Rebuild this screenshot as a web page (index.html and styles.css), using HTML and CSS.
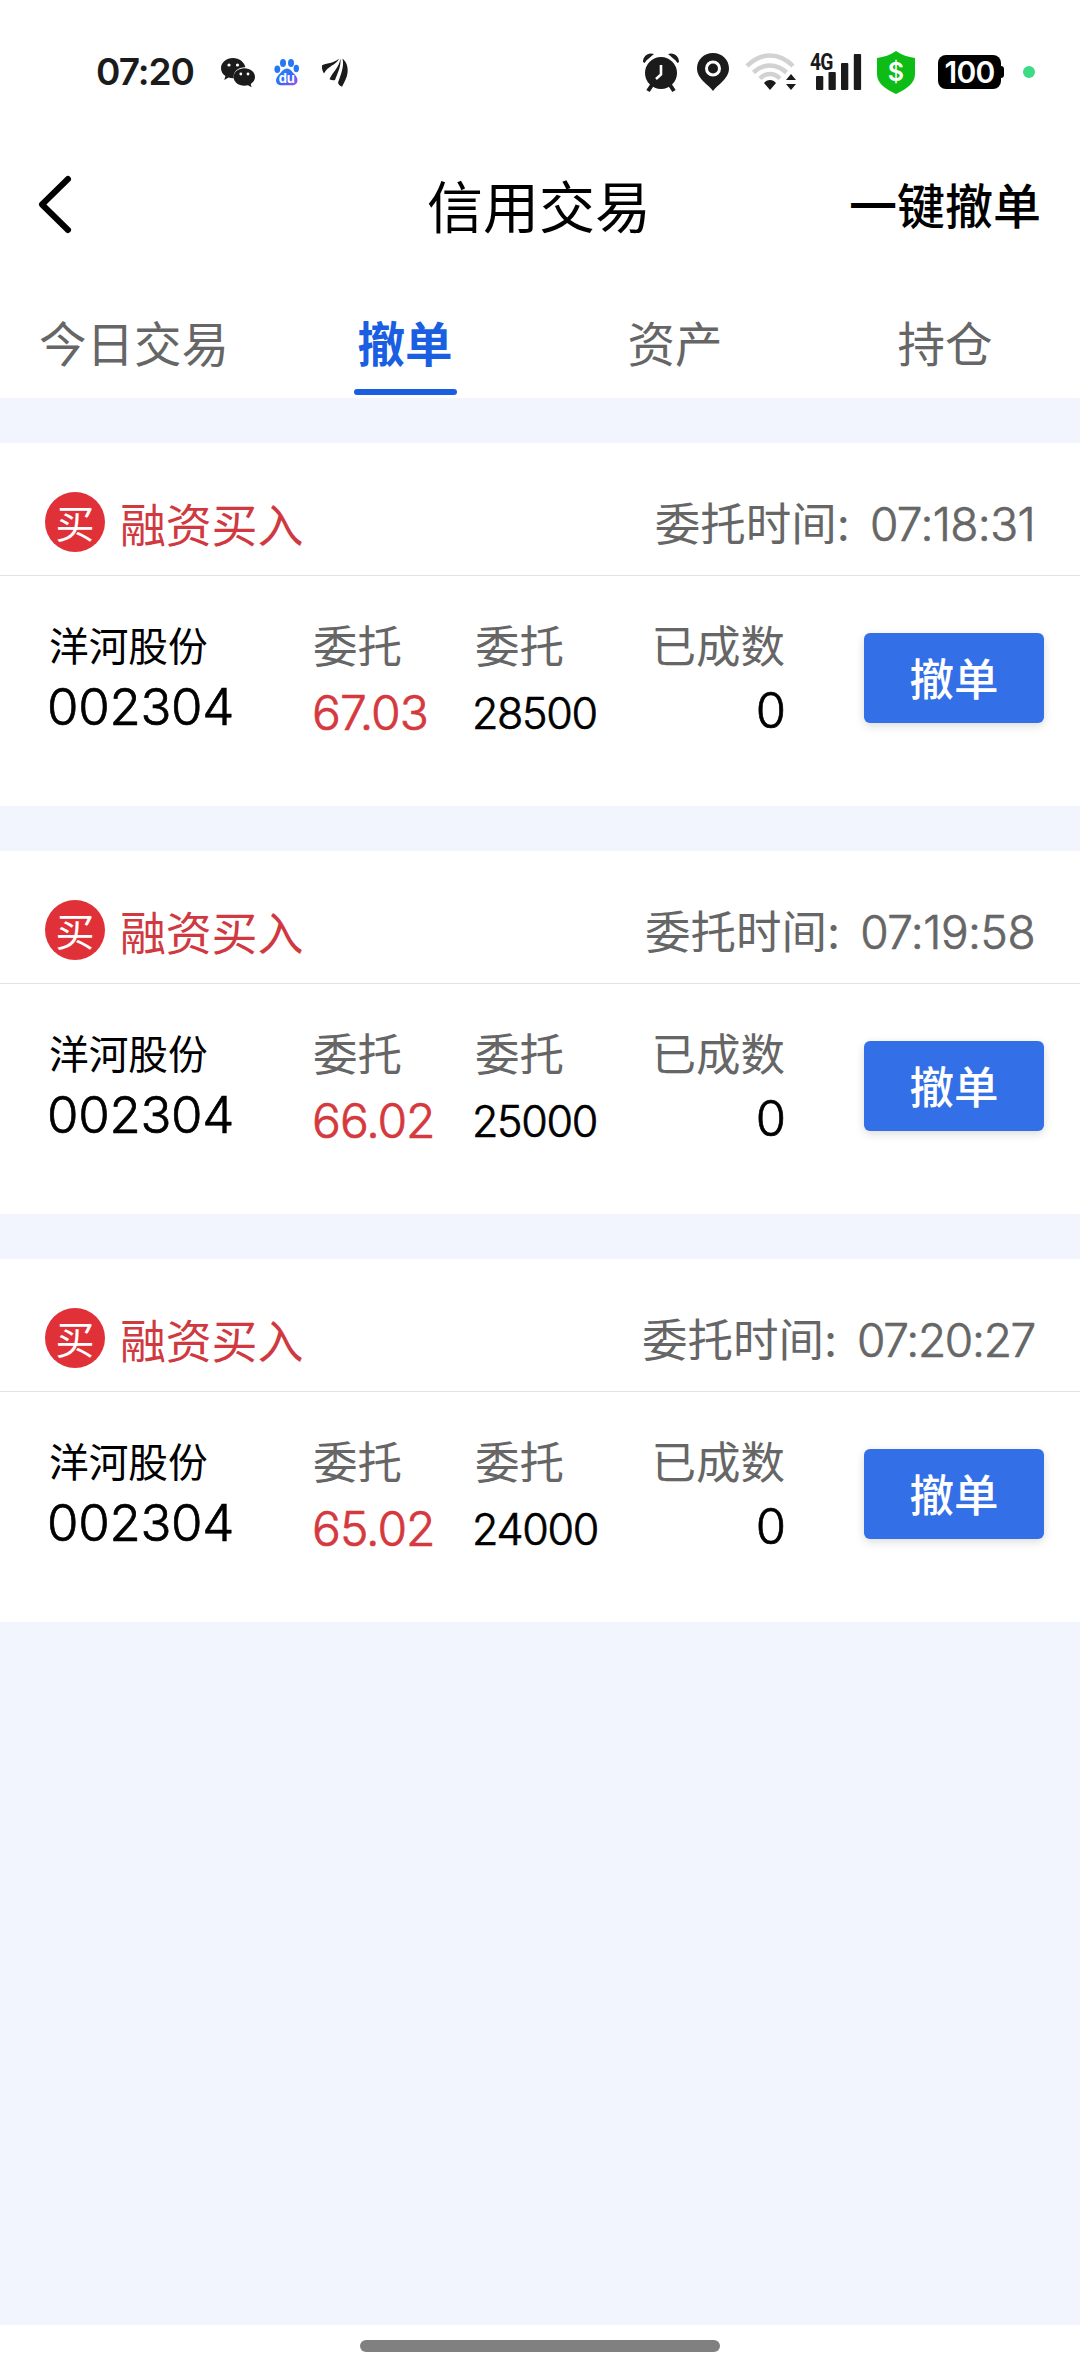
FILE: index.html
```html
<!DOCTYPE html>
<html lang="zh-CN">
<head>
<meta charset="utf-8">
<title>信用交易</title>
<link rel="stylesheet" href="styles.css">
</head>
<body>
<div class="status">
  <span class="clock">07:20</span>
  <svg class="i-wechat" width="36" height="32" viewBox="0 0 36 32"><path fill="#1b1b1b" d="M13 2C6.300 2 1 6.500 1 12.200c0 3.200 1.700 6 4.400 7.900L4.300 24l4.300-2.400c1.400.4 2.900.6 4.400.6h.8C12.500 15.500 18.500 11 25.400 11.200 24.200 5.800 19 2 13 2z"/><path fill="#1b1b1b" d="M24.300 12.300c-6 0-10.700 3.900-10.700 8.700s4.700 8.700 10.700 8.700c1.300 0 2.600-.2 3.700-.5l3.600 2-.9-3.300C33.300 26.300 35 23.800 35 21c0-4.800-4.700-8.700-10.700-8.700z"/><g fill="#fff"><circle cx="9" cy="9" r="1.600"/><circle cx="17.500" cy="9" r="1.600"/><circle cx="20.800" cy="18" r="1.400"/><circle cx="28" cy="18" r="1.400"/></g></svg>
  <svg class="i-paw" width="26" height="28" viewBox="0 0 26 28"><defs><linearGradient id="paw" x1="0" y1="0" x2="1" y2="1"><stop offset="0" stop-color="#1f8bff"/><stop offset=".6" stop-color="#3b66f5"/><stop offset="1" stop-color="#b44cf0"/></linearGradient></defs><g fill="#2577f4"><ellipse cx="3.300" cy="11.300" rx="2.900" ry="3.700"/><ellipse cx="9" cy="5" rx="3" ry="4"/><ellipse cx="17" cy="5" rx="3" ry="4"/><ellipse cx="22.300" cy="10.500" rx="2.700" ry="3.700"/></g><path fill="url(#paw)" d="M13 10.500c3 0 4.500 2.500 6.500 4.800 2 2.200 4 4 4 7 0 3.200-2.300 5-5.300 5H7.500c-3.200 0-5.500-2-5.500-5 0-3 2.200-4.800 4.200-7 2-2.300 3.800-4.800 6.800-4.800z"/><text x="12.800" y="24.500" text-anchor="middle" class="pawtext">du</text></svg>
  <svg class="i-wing" width="28" height="32" viewBox="0 0 28 32"><path fill="#1b1b1b" d="M1 9.500C3.500 7.500 11 8 18 2.800 15.500 9 6.500 10 3 17.500 1.300 15 .7 12 1 9.500zM19.500 2.500c.8 7.500-3 15-5.500 21.500-1.900.4-3.800.1-5.500-.8C11.500 16 18 12 19.500 2.500z"/><path fill="#1b1b1b" d="M21.500 2.500c4.300 3.500 5.800 9 5 14.500-.6 4.500-3 9-5.500 13.800-1.800-.8-3.600-2.200-4-4C19.500 19 23.500 11.500 21.500 2.500z"/></svg>
  <svg class="i-alarm" width="38" height="40" viewBox="0 0 38 40"><circle cx="19" cy="21" r="16" fill="#1b1b1b"/><path stroke="#1b1b1b" stroke-width="4" d="M10 33l-4 6M28 33l4 6"/><path fill="#1b1b1b" d="M1 10C1 4 6 0 12 2 9 5 5 7 2.500 11zM37 10C37 4 32 0 26 2c3 3 7 5 9.500 9z"/><path fill="none" stroke="#fff" stroke-width="2.600" d="M19 13v9.500l-5 4.500"/></svg>
  <svg class="i-pin" width="32" height="38" viewBox="0 0 32 38"><path fill="#1b1b1b" d="M16 0C7 0 0 6.800 0 15.300c0 5.500 3 9.700 7 13.700 3 3 6.500 5.500 9 9 2.500-3.500 6-6 9-9 4-4 7-8.200 7-13.700C32 6.800 25 0 16 0z"/><circle cx="16" cy="15.500" r="6.500" fill="none" stroke="#fff" stroke-width="3"/></svg>
  <svg class="i-wifi" width="52" height="38" viewBox="0 0 52 38"><g fill="none" stroke="#d2d2d2" stroke-width="4.500"><path d="M2 13C16-1 34-1 48 13"/><path d="M8.500 19.500c10-9.500 23-9.500 33 0"/><path d="M15 25.500c6-6 14-6 20 0"/></g><path fill="#1b1b1b" d="M25 37l-6-7c3-4 9-4 12 0zM46 21l5 6H41zM46 37l5-6H41z"/></svg>
  <svg class="i-signal" width="53" height="40" viewBox="0 0 53 40"><text transform="translate(1 17.500) scale(.84 1)" class="gtext">4G</text><g fill="#1b1b1b"><rect x="7" y="24" width="7.300" height="14" rx="1"/><rect x="19.500" y="20" width="7.300" height="18" rx="1"/><rect x="32" y="11" width="7.300" height="27" rx="1"/><rect x="44.800" y="2" width="7.300" height="36" rx="1"/></g></svg>
  <svg class="i-shield" width="38" height="43" viewBox="0 0 38 43"><path fill="#0dbd15" d="M19 0C25 4 31 6 38 7v16c0 9-8 15-19 20C8 38 0 32 0 23V7C7 6 13 4 19 0z"/><text x="19" y="30" text-anchor="middle" class="dollar">$</text></svg>
  <span class="battery">100</span>
  <span class="dot"></span>
</div>

<header class="nav">
  <svg width="36" height="60" viewBox="0 0 36 60"><path d="M32 5L6 30.500 32 56" fill="none" stroke="#000" stroke-width="6" stroke-linecap="round" stroke-linejoin="round"/></svg>
  <h1 class="title">信用交易</h1>
  <span class="all">一键撤单</span>
</header>

<nav class="tabs">
  <span class="tab first">今日交易</span>
  <span class="tab active">撤单</span>
  <span class="tab">资产</span>
  <span class="tab">持仓</span>
</nav>

<main class="list">
  <section class="card">
    <div class="head"><span class="badge">买</span><span class="kind">融资买入</span><span class="when">委托时间<span class="colon">:</span></span><span class="time t1">07:18:31</span></div>
    <div class="body">
      <div class="col stock"><span class="name">洋河股份</span><span class="code">002304</span></div>
      <div class="col"><span class="label">委托</span><span class="price">67.03</span></div>
      <div class="col"><span class="label">委托</span><span class="qty">28500</span></div>
      <div class="col done"><span class="label">已成数</span><span class="filled">0</span></div>
      <button class="cancel">撤单</button>
    </div>
  </section>
  <section class="card">
    <div class="head"><span class="badge">买</span><span class="kind">融资买入</span><span class="when">委托时间<span class="colon">:</span></span><span class="time t2">07:19:58</span></div>
    <div class="body">
      <div class="col stock"><span class="name">洋河股份</span><span class="code">002304</span></div>
      <div class="col"><span class="label">委托</span><span class="price">66.02</span></div>
      <div class="col"><span class="label">委托</span><span class="qty">25000</span></div>
      <div class="col done"><span class="label">已成数</span><span class="filled">0</span></div>
      <button class="cancel">撤单</button>
    </div>
  </section>
  <section class="card">
    <div class="head"><span class="badge">买</span><span class="kind">融资买入</span><span class="when">委托时间<span class="colon">:</span></span><span class="time t3">07:20:27</span></div>
    <div class="body">
      <div class="col stock"><span class="name">洋河股份</span><span class="code">002304</span></div>
      <div class="col"><span class="label">委托</span><span class="price">65.02</span></div>
      <div class="col"><span class="label">委托</span><span class="qty">24000</span></div>
      <div class="col done"><span class="label">已成数</span><span class="filled">0</span></div>
      <button class="cancel">撤单</button>
    </div>
  </section>
</main>
<footer class="home"><span class="handle"></span></footer>
</body>
</html>
```
FILE: styles.css
```css
* { box-sizing: border-box; }
body {
  margin: 0;
  width: 1080px;
  height: 2373px;
  display: flex;
  flex-direction: column;
  background: #fff;
  color: #000;
  font-family: "Noto Sans CJK SC", sans-serif;
  white-space: nowrap;
}
svg { display: block; flex: none; overflow: visible; }

.status { height: 144px; display: flex; align-items: center; padding-left: 96px; flex: none; }
.clock { width: 98px; font: 600 37px/40px Inter, sans-serif; letter-spacing: -1px; color: #1b1b1b; }
.i-wechat { margin-left: 26px; }
.i-paw { margin-left: 18px; }
.i-wing { margin-left: 21px; }
.i-alarm { margin-left: 293px; }
.i-pin { margin-left: 17px; }
.i-wifi { margin-left: 16px; }
.i-signal { margin-left: 12px; }
.i-shield { margin-left: 15px; }
.pawtext { font: 700 13px Inter, sans-serif; fill: #fff; }
.gtext { font: 700 23px Roboto, sans-serif; fill: #1b1b1b; letter-spacing: -1px; }
.dollar { font: 600 25px Inter, sans-serif; fill: #fff; }
.battery {
  position: relative;
  margin-left: 23px;
  width: 63px;
  height: 34px;
  border-radius: 8px;
  background: #000;
  color: #fff;
  font: 600 30px/35px Inter, sans-serif;
  letter-spacing: -0.8px;
  text-align: center;
}
.battery::after {
  content: "";
  position: absolute;
  left: 62px;
  top: 11px;
  width: 4px;
  height: 12px;
  border-radius: 0 3px 3px 0;
  background: #000;
}
.dot { margin-left: 22px; width: 12px; height: 12px; border-radius: 50%; background: #3ddc84; }

.nav {
  height: 120px;
  flex: none;
  display: grid;
  grid-template-columns: 1fr auto 1fr;
  align-items: center;
  padding: 0 39px 0 36px;
}
.title { margin: 0 0 1px 1px; font-size: 56px; line-height: 60px; font-weight: 400; }
.all { justify-self: end; margin-bottom: 3px; font-size: 48px; line-height: 60px; font-weight: 500; }

.tabs { height: 134px; flex: none; display: grid; grid-template-columns: repeat(4, 1fr); justify-items: center; }
.tab {
  height: 131px;
  padding: 48px 5px 0;
  font-size: 47.500px;
  line-height: 60px;
  color: #666;
  border-bottom: 6px solid transparent;
}
.first { padding-right: 7px; }
.active {
  position: relative;
  color: #1a5fe2;
  font-weight: 700;
}
.active::after {
  content: "";
  position: absolute;
  left: 1px;
  right: 1px;
  bottom: -6px;
  height: 6px;
  border-radius: 3px;
  background: #1a5fe2;
}

.list {
  flex: 1;
  display: flex;
  flex-direction: column;
  gap: 45px;
  padding-top: 45px;
  background: #f2f5fe;
}
.card { height: 363px; background: #fff; }
.head {
  height: 133px;
  display: flex;
  align-items: center;
  padding: 26px 45px 0 45px;
  border-bottom: 1px solid #e3e3e3;
}
.badge {
  width: 60px;
  height: 60px;
  border-radius: 50%;
  background: #e13138;
  color: #fff;
  font-size: 39px;
  line-height: 58px;
  text-align: center;
}
.kind { margin-left: 15px; font-size: 46px; line-height: 60px; color: #cf393f; letter-spacing: -0.2px; }
.when { margin: 2px 0 0 auto; font-size: 45.500px; line-height: 60px; color: #666; }
.colon { font-family: Inter, sans-serif; letter-spacing: -1px; }
.time, .code, .price, .qty, .filled { -webkit-text-stroke: 0.7px currentColor; }
.time {
  margin: 4px 0 0 21px;
  font: 300 46px/60px Inter, sans-serif;
  color: #666;
}
.t1 { letter-spacing: -0.6px; }
.t2 { letter-spacing: -0.5px; }
.t3 { letter-spacing: -1.300px; }

.body { display: grid; grid-template-columns: 264px 162px 160px 150px auto; padding: 37px 36px 0 49px; justify-content: start; }
.col { display: flex; flex-direction: column; }
.label { padding-top: 1px; font-size: 44.500px; line-height: 60px; color: #666; }
.name { font-size: 39.700px; line-height: 62px; }
.code { font: 300 51px/60px Inter, sans-serif; margin: 2px 0 0 -2px; letter-spacing: -0.300px; }
.price { font: 300 48px/60px Inter, sans-serif; margin: 9px 0 0 -1px; color: #d5393e; letter-spacing: -1px; }
.qty { font: 300 43px/60px Inter, sans-serif; margin: 9px 0 0 -3px; letter-spacing: -1.300px; }
.done { align-items: flex-end; }
.filled { font: 300 49px/60px Inter, sans-serif; margin: 7px -1px 0 0; }
.cancel {
  width: 180px;
  height: 90px;
  margin: 20px 0 0 79px;
  padding: 0 0 3px;
  border: 0;
  border-radius: 6px;
  background: #336fe6;
  box-shadow: 0 3px 10px rgba(0, 0, 0, .14);
  color: #fff;
  font: 500 44.500px/60px "Noto Sans CJK SC", sans-serif;
}

.home { height: 48px; flex: none; display: flex; justify-content: center; padding-top: 15px; background: #fff; }
.handle { width: 360px; height: 12px; border-radius: 6px; background: #808080; }
```
